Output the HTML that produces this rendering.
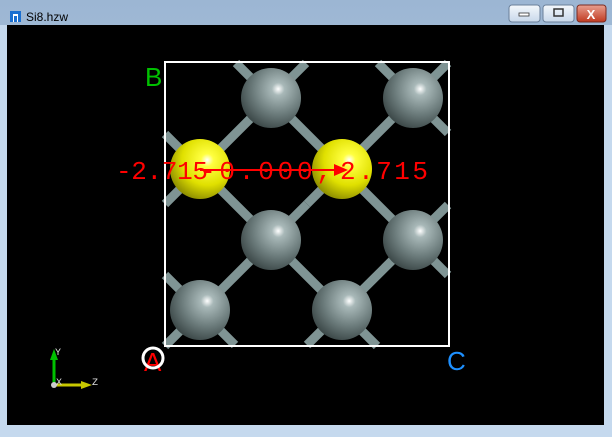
<!DOCTYPE html><html><head><style>body{margin:0;width:612px;height:432px;overflow:hidden;background:#c5d9ee}</style></head><body>
<svg width="612" height="432" xmlns="http://www.w3.org/2000/svg" font-family="Liberation Sans, sans-serif">
<defs>
<linearGradient id="tb" x1="0" y1="0" x2="0" y2="1"><stop offset="0" stop-color="#9cb6d3"/><stop offset="1" stop-color="#c2d7ed"/></linearGradient>
<radialGradient id="g" cx="0.62" cy="0.35" r="0.7"><stop offset="0" stop-color="#fff"/><stop offset="0.15" stop-color="#a8b8b8"/><stop offset="0.6" stop-color="#6c7c7c"/><stop offset="1" stop-color="#3a4646"/></radialGradient>
<radialGradient id="y" cx="0.62" cy="0.35" r="0.7"><stop offset="0" stop-color="#fff"/><stop offset="0.15" stop-color="#ffff40"/><stop offset="0.6" stop-color="#e0e000"/><stop offset="1" stop-color="#8a8a00"/></radialGradient>
<linearGradient id="cl" x1="0" y1="0" x2="0" y2="1"><stop offset="0" stop-color="#e8a090"/><stop offset="1" stop-color="#c03a20"/></linearGradient>
<linearGradient id="bt" x1="0" y1="0" x2="0" y2="1"><stop offset="0" stop-color="#f4f8fc"/><stop offset="1" stop-color="#c8d8ea"/></linearGradient>
</defs>
<rect width="612" height="432" fill="url(#tb)"/>
<rect x="0" y="25" width="612" height="407" fill="#c5d9ee"/>
<rect x="10" y="11" width="11" height="11" fill="#1a6fd0"/><rect x="13" y="14" width="5" height="8" fill="#fff"/><rect x="14" y="16" width="3" height="6" fill="#1a6fd0"/>
<text x="26" y="21" font-size="12" fill="#000">Si8.hzw</text>
<rect x="509" y="5" width="31" height="17" rx="3" fill="url(#bt)" stroke="#6a7f99"/>
<rect x="519" y="13" width="10" height="3" fill="#fff" stroke="#333" stroke-width="0.8"/>
<rect x="543" y="5" width="31" height="17" rx="3" fill="url(#bt)" stroke="#6a7f99"/>
<rect x="554" y="9" width="9" height="7" fill="none" stroke="#333" stroke-width="1.5"/>
<rect x="577" y="5" width="29" height="17" rx="3" fill="url(#cl)" stroke="#7a2a20"/>
<text x="591" y="19" font-size="13" font-weight="bold" fill="#fff" text-anchor="middle">X</text>
<rect x="7" y="25" width="597" height="400" fill="#000"/>
<g stroke="#7f9494" stroke-width="9" stroke-linecap="butt">
<line x1="165" y1="134" x2="377" y2="346"/>
<line x1="165" y1="204" x2="306" y2="63"/>
<line x1="236" y1="63" x2="448" y2="275"/>
<line x1="307" y1="204" x2="448" y2="63"/>
<line x1="165" y1="275" x2="235" y2="345"/>
<line x1="165" y1="346" x2="307" y2="204"/>
<line x1="307" y1="345" x2="448" y2="205"/>
<line x1="378" y1="63" x2="448" y2="133"/>
</g>
<rect x="165" y="62" width="284" height="284" fill="none" stroke="#fff" stroke-width="2"/>
<g>
<circle cx="271" cy="98" r="30" fill="url(#g)"/>
<circle cx="413" cy="98" r="30" fill="url(#g)"/>
<circle cx="271" cy="240" r="30" fill="url(#g)"/>
<circle cx="413" cy="240" r="30" fill="url(#g)"/>
<circle cx="200" cy="310" r="30" fill="url(#g)"/>
<circle cx="342" cy="310" r="30" fill="url(#g)"/>
<circle cx="200" cy="169" r="30" fill="url(#y)"/>
<circle cx="342" cy="169" r="30" fill="url(#y)"/>
</g>
<g font-family="Liberation Mono, monospace" font-size="26" fill="#f00">
<text x="116" y="179" textLength="92">-2.715</text>
<text x="200" y="179" textLength="132">-0.000,</text>
<text x="340" y="179" textLength="88">2.715</text>
</g>
<line x1="200" y1="170" x2="340" y2="170" stroke="#f00" stroke-width="2"/>
<path d="M334 164 L348 170 L334 176Z" fill="#f00"/>
<text x="145" y="86" font-size="26" fill="#00c000">B</text>
<text x="447" y="370" font-size="26" fill="#1e90ff">C</text>
<text x="144" y="371" font-size="26" fill="#f00">A</text>
<circle cx="153" cy="358" r="10" fill="none" stroke="#fff" stroke-width="3"/>
<line x1="54" y1="385" x2="54" y2="358" stroke="#00c000" stroke-width="3"/>
<path d="M50 360 L54 349 L58 360Z" fill="#00c000"/>
<line x1="54" y1="385" x2="84" y2="385" stroke="#c8c800" stroke-width="3"/>
<path d="M81 381 L92 385 L81 389Z" fill="#c8c800"/>
<circle cx="54" cy="385" r="3" fill="#ccc"/>
<g font-family="Liberation Mono, monospace" font-size="10" fill="#ddd">
<text x="55" y="355">Y</text><text x="92" y="385">Z</text><text x="56" y="385">X</text>
</g>
</svg>
</body></html>
